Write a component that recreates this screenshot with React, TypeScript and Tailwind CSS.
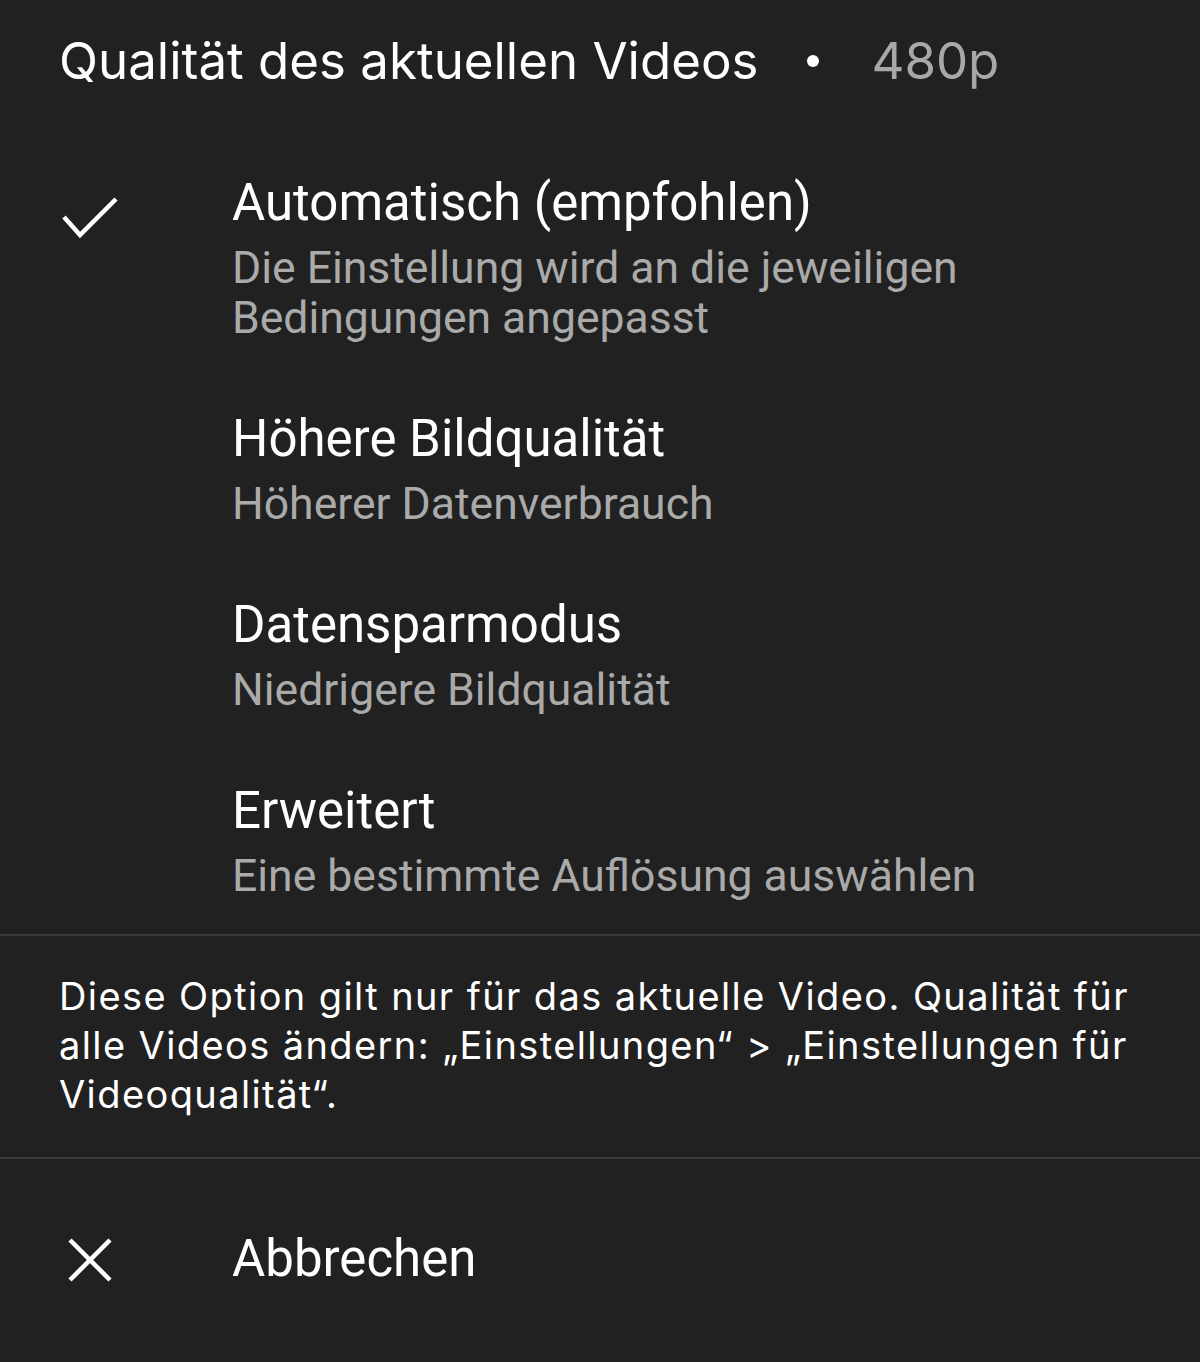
import { ReactNode } from 'react';

const options = [
  {
    title: 'Automatisch (empfohlen)',
    sub: ['Die Einstellung wird an die jeweiligen', 'Bedingungen angepasst'],
    selected: true,
  },
  { title: 'Höhere Bildqualität', sub: ['Höherer Datenverbrauch'], selected: false },
  { title: 'Datensparmodus', sub: ['Niedrigere Bildqualität'], selected: false },
  { title: 'Erweitert', sub: ['Eine bestimmte Auflösung auswählen'], selected: false },
];

function CheckIcon() {
  return (
    <svg width="56" height="44" viewBox="0 0 56 44" fill="none">
      <polyline
        points="2,21 18,39 54,3"
        stroke="#ffffff"
        strokeWidth="4.5"
        strokeLinecap="butt"
        strokeLinejoin="miter"
      />
    </svg>
  );
}

function CloseIcon() {
  return (
    <svg width="46" height="46" viewBox="0 0 46 46" fill="none">
      <path d="M3 3 L43 43 M43 3 L3 43" stroke="#ffffff" strokeWidth="4.5" />
    </svg>
  );
}

function Row({ icon, children }: { icon?: ReactNode; children: ReactNode }) {
  return (
    <div className="flex">
      <div className="w-[232px] shrink-0 pl-[62px]">{icon}</div>
      <div className="flex-1">{children}</div>
    </div>
  );
}

export default function App() {
  return (
    <div
      className="w-[1200px] h-[1362px] bg-[#212121] text-white overflow-hidden"
      style={{ fontFamily: 'Roboto, "Noto Sans", sans-serif' }}
    >
      {/* Header */}
      <div
        className="flex items-center pl-[59px] pt-[31px] pb-[49px] text-[51px] leading-[60px]"
        style={{ fontFamily: 'Inter, "Noto Sans", sans-serif' }}
      >
        <span>Qualität des aktuellen Videos</span>
        <span className="ml-[49px] mr-[52px] w-[12px] h-[12px] rounded-full bg-white" />
        <span className="text-[#a8a8a8]">480p</span>
      </div>

      {/* Options */}
      <div>
        {options.map((o) => (
          <div key={o.title} className="py-[33px]">
            <Row
              icon={
                o.selected ? (
                  <div className="pt-[23px]">
                    <CheckIcon />
                  </div>
                ) : null
              }
            >
              <div className="text-[51px] leading-[60px] mb-[10px]">{o.title}</div>
              <div className="text-[44.5px] leading-[50px] text-[#aaaaaa]">
                {o.sub.map((s) => (
                  <div key={s}>{s}</div>
                ))}
              </div>
            </Row>
          </div>
        ))}
      </div>

      <div className="h-[2px] bg-[#3a3a3a]" />

      {/* Note */}
      <div
        className="pl-[59px] pr-[40px] pt-[36px] pb-[38px] text-[38px] leading-[49px] tracking-[1.4px] whitespace-nowrap"
        style={{ fontFamily: 'Inter, "Noto Sans", sans-serif' }}
      >
        <div>Diese Option gilt nur für das aktuelle Video. Qualität für</div>
        <div>alle Videos ändern: „Einstellungen“ &gt; „Einstellungen für</div>
        <div>Videoqualität“.</div>
      </div>

      <div className="h-[2px] bg-[#3a3a3a]" />

      {/* Cancel */}
      <div className="pt-[70px]">
        <Row
          icon={
            <div className="pt-[8px] pl-[5px]">
              <CloseIcon />
            </div>
          }
        >
          <div className="text-[51px] leading-[60px]">Abbrechen</div>
        </Row>
      </div>
    </div>
  );
}
